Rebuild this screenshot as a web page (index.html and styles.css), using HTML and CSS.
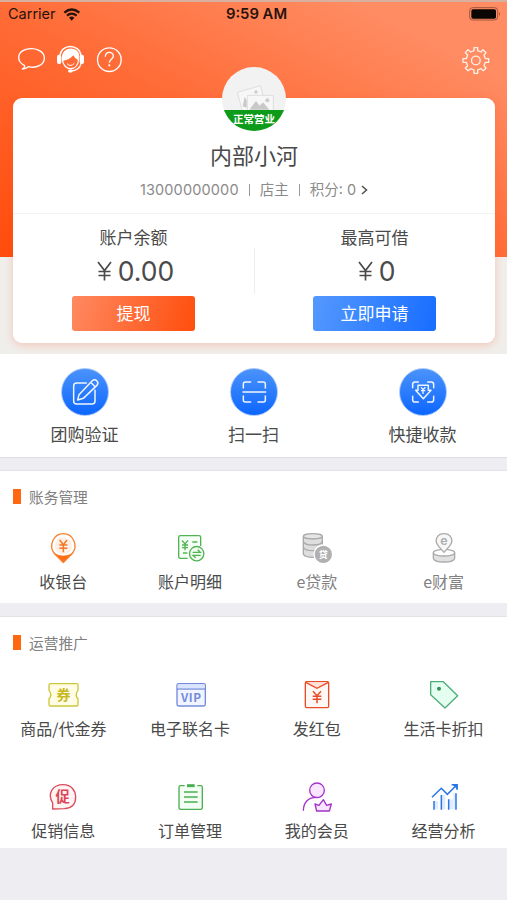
FILE: index.html
```html
<!DOCTYPE html>
<html lang="zh-CN">
<head>
<meta charset="utf-8">
<title>店铺中心</title>
<link rel="stylesheet" href="styles.css">
</head>
<body>
<div class="hero">
  <div class="status">
    <div class="carrier">Carrier
      <svg width="18" height="13" viewBox="186 19 54 39"><g fill="none" stroke="#27130c" stroke-width="7"><path d="M190 33Q212 14 235 33"/><path d="M198 42Q212 30 227 42"/></g><path d="M204 48Q212 41 220 48L212 57Z" fill="#27130c"/></svg>
    </div>
    <div class="time">9:59 AM</div>
    <svg class="battery" width="32" height="14" viewBox="648 19 96 42"><rect x="650" y="21" width="84" height="37" rx="9" fill="none" stroke="#a2563c" stroke-width="3"/><rect x="655" y="26" width="74" height="28" rx="5" fill="#0b0503"/><path d="M738 34Q744 40 738 46Z" fill="#a2563c"/></svg>
  </div>
  <div class="tools">
    <svg width="29" height="29" viewBox="51 135 87 87" fill="none" stroke="#fff" stroke-width="4"><path d="M74 197C49 184 50 156 78 148C105 141 133 153 133 174C133 195 109 206 85 200Q78 206 67 207Q75 203 74 197Z" stroke-linejoin="round"/></svg>
    <svg width="29" height="29" viewBox="168 135 87 87"><path d="M180 168C182 130 240 130 243 168" fill="none" stroke="#fff" stroke-width="4"/><path d="M186 178C180 138 240 134 238 172L234 180Q224 175 220 166Q208 180 190 182Z" fill="#fff"/><rect x="171" y="164" width="13" height="28" rx="6" fill="#fff"/><rect x="239" y="164" width="13" height="28" rx="6" fill="#fff"/><path d="M187 176C188 197 200 206 212 206C226 206 235 194 236 176M244 188C240 205 227 213 213 213" fill="none" stroke="#fff" stroke-width="4"/><path d="M201 191Q212 202 223 190" fill="none" stroke="#fff" stroke-width="3"/><ellipse cx="211" cy="213" rx="7" ry="5" fill="#fff"/></svg>
    <svg width="29" height="29" viewBox="283 135 87 87" fill="none" stroke="#fff" stroke-width="4"><circle cx="326" cy="179" r="35.5"/><path d="M314 170C313 153 338 153 338 168C338 178 326 177 326 188"/><path d="M326 193V199" stroke-width="5"/></svg>
    <svg class="gear" width="31" height="31" viewBox="622 135 93 93" fill="none" stroke="#fff0e9" stroke-width="4" stroke-linejoin="round"><path d="M664 152V143H675V152L685 156L691 149L700 158L694 165L698 176H708V187H698L694 197L700 204L692 212L685 206L675 210V220H664V210L654 206L646 212L638 204L645 197L641 187H631V176H641L645 165L638 158L646 149L654 156Z"/><circle cx="669.500" cy="181.500" r="13"/></svg>
  </div>
  <div class="card">
    <div class="profile">
      <div class="avatar">
        <svg width="64" height="43" viewBox="306 17 192 129" stroke-linejoin="round"><g fill="#f7f7f7" stroke="#dedede" stroke-width="3"><path d="M352 93L421 73L438 133L368 153Z"/><path d="M382 102H460V160H382Z"/></g><circle cx="408" cy="92" r="5" fill="#ccc"/><circle cx="442" cy="117" r="6" fill="#ccc"/><path d="M368 135L374 107L380 117V139ZM388 145L408 119L419 133L429 123L448 145Z" fill="#c9c9c9"/></svg>
        <div class="badge">正常营业</div>
      </div>
      <div class="name">内部小河</div>
      <div class="meta"><span>13000000000</span><span class="bar"></span><span>店主</span><span class="bar"></span><span>积分: 0</span><svg width="7" height="10" viewBox="0 0 7 10"><path d="M1 1L5.500 5L1 9" fill="none" stroke="#555" stroke-width="1.600"/></svg></div>
    </div>
    <div class="funds">
      <div class="fund"><div class="fund-label">账户余额</div><div class="amount"><svg class="yen" width="15" height="20" viewBox="0 0 15 20"><path d="M1 1L7.500 9.500L14 1M7.500 9.500V19.500M1.500 10.500H13.500M1.500 14.500H13.500"/></svg>0.00</div><div class="btn orange">提现</div></div>
      <div class="fund"><div class="fund-label">最高可借</div><div class="amount"><svg class="yen" width="15" height="20" viewBox="0 0 15 20"><path d="M1 1L7.500 9.500L14 1M7.500 9.500V19.500M1.500 10.500H13.500M1.500 14.500H13.500"/></svg>0</div><div class="btn blue">立即申请</div></div>
    </div>
  </div>
</div>

<div class="quick">
  <div class="quick-item"><div class="disc"><svg width="48" height="48" viewBox="183 54 144 144" fill="none" stroke="#eef5ff" stroke-width="4.500" stroke-linejoin="round"><path d="M259 99H230Q221 99 221 108V153Q221 162 230 162H276Q285 162 285 153V121" stroke-linecap="round"/><path d="M233 150L237 134L276 93Q284 86 291 93Q297 100 290 107L250 145ZM272 97L286 111"/></svg></div>团购验证</div>
  <div class="quick-item"><div class="disc"><svg width="48" height="48" viewBox="-73 54 144 144" fill="none" stroke="#eef5ff" stroke-width="4.500" stroke-linecap="round" stroke-linejoin="round"><path d="M-11 96H-27Q-33 96-33 102V114M11 96H27Q33 96 33 102V114M-33 138V150Q-33 156-27 156H-11M33 138V150Q33 156 27 156H11M-34 126H34"/></svg></div>扫一扫</div>
  <div class="quick-item"><div class="disc"><svg width="48" height="48" viewBox="438 54 144 144" fill="none" stroke="#eef5ff" stroke-width="4.500" stroke-linejoin="round"><path d="M496 96H486Q479 96 479 103V113M524 96H535Q542 96 542 103V113M479 139V149Q479 156 486 156H496M524 156H535Q542 156 542 149V139" stroke-linecap="round"/><path d="M495 106H526V121H534L511 146L488 121H495Z"/><path d="M504 112L510 119L517 112M510 119V132M504 122H517" stroke-width="4"/></svg></div>快捷收款</div>
</div>

<div class="section">
  <div class="title">账务管理</div>
  <div class="grid">
    <div class="item"><svg viewBox="144 36 96 96"><path d="M193 130L160 97Q177 107 193 107Q209 107 226 97Z" fill="#ff6c12"/><path d="M193 127L168 102C145 77 165 41 193 41C221 41 241 77 218 102Z" fill="none" stroke="#f58233" stroke-width="4"/><circle cx="193" cy="77" r="26" fill="#fff0e6"/><path d="M182 60L193 74L204 60M193 74V97M181 75H205M181 85H205" fill="none" stroke="#f47726" stroke-width="4.500"/></svg>收银台</div>
    <div class="item"><svg viewBox="522 36 96 96" fill="none" stroke="#51b453" stroke-width="4"><path d="M563 115H541Q536 115 536 109V52Q536 47 541 47H597Q602 47 602 52V78" fill="#f6fff6"/><path d="M546 61L555 72L564 61M555 72V91M546 75H564M546 83H564M577 66H592M549 99H562"/><circle cx="590" cy="101" r="21.500" fill="#f1fbf1"/><path d="M578 97H601L593 89M602 106H579L587 113"/></svg>账户明细</div>
    <div class="item muted"><svg viewBox="144 36 96 96" stroke="#aaa" stroke-width="4"><path d="M151 49V102Q154 112 182 112L208 95V49" fill="#dedede"/><ellipse cx="179.500" cy="49" rx="28.500" ry="8" fill="#e5e5e5"/><path d="M151 64Q153 75 180 75Q207 75 208 64M151 81Q153 92 180 92Q200 92 207 82" fill="none"/><circle cx="211" cy="103" r="28" fill="#b0b0b0" stroke="#fff"/><text x="211" y="113" text-anchor="middle" font-size="27" font-weight="700" fill="#fff" stroke="none">贷</text></svg>e贷款</div>
    <div class="item muted"><svg viewBox="524 36 96 96" stroke="#ababab" stroke-width="4"><path d="M540 98V115Q542 126 572 126Q602 126 604 115V98" fill="#e1e1e1"/><ellipse cx="572" cy="98" rx="32" ry="10" fill="#fff"/><path d="M572 97L556 79C540 61 552 41 572 41C592 41 604 61 588 79Z" fill="#f7f7f7"/><text x="572" y="75" text-anchor="middle" font-size="37" font-weight="600" fill="#ababab" stroke="none" class="latin">e</text></svg>e财富</div>
  </div>
</div>

<div class="section promo">
  <div class="title">运营推广</div>
  <div class="grid">
    <div class="item"><svg viewBox="144 27 96 96"><path d="M150 45Q150 41 154 41H233Q237 41 237 45V61Q226 74 237 87V104Q237 108 233 108H154Q150 108 150 104V87Q161 74 150 61Z" fill="#fffde5" stroke="#cbc83b" stroke-width="4"/><text x="193.500" y="90" text-anchor="middle" font-size="42" font-weight="700" fill="#c9b821">券</text></svg>商品/代金券</div>
    <div class="item"><svg viewBox="522 27 96 96"><rect x="531" y="41" width="85" height="67" rx="5" fill="#f1f5ff" stroke="#738bdb" stroke-width="4"/><path d="M531 57H616" stroke="#738bdb" stroke-width="4"/><path d="M533 49H614" stroke="#dce5ff" stroke-width="11"/><text x="574" y="95" text-anchor="middle" font-size="35" font-weight="700" letter-spacing="2" fill="#738bdb">VIP</text></svg>电子联名卡</div>
    <div class="item"><svg viewBox="144 27 96 96" fill="none" stroke="#e74d28" stroke-width="4"><rect x="157" y="35" width="70" height="78" rx="4" fill="#fff7f3"/><path d="M158 37L192 55L226 37" fill="#ffe1d8"/><path d="M180 64L192 77L204 64M192 77V100M179 79H205M179 88H205" stroke-width="4.500"/></svg>发红包</div>
    <div class="item"><svg viewBox="524 27 96 96"><path d="M532 35H570L613 77L575 114L532 74Z" fill="#e4ffef" stroke="#4fad79" stroke-width="4" stroke-linejoin="round"/><circle cx="557" cy="56" r="6" fill="#36925d"/></svg>生活卡折扣</div>
    <div class="item"><svg viewBox="144 333 96 96"><path d="M161 417V399C143 369 162 344 193 344C217 344 230 362 230 381C230 406 215 415 196 416Z" fill="#fff3f4" stroke="#dc4c5d" stroke-width="4" stroke-linejoin="round"/><text x="191" y="397" text-anchor="middle" font-size="43" font-weight="700" fill="#dc4656">促</text></svg>促销信息</div>
    <div class="item"><svg viewBox="522 333 96 96" fill="none" stroke="#4caf54" stroke-width="4"><path d="M554 347H542Q537 347 537 352V412Q537 418 543 418H602Q607 418 607 412V352Q607 347 602 347H592" fill="#f2fff2"/><path d="M561 347H584" stroke-width="9"/><path d="M552 366H593M552 381H593M552 396H593"/></svg>订单管理</div>
    <div class="item"><svg viewBox="144 333 96 96" fill="none" stroke="#a332c8" stroke-width="4" stroke-linejoin="round"><circle cx="192" cy="361" r="22" fill="#f8e5ff"/><path d="M151 422C152 394 169 382 192 382"/><path d="M186 402L198 406L211 389L221 406L235 402L229 423H191Z" fill="#f8e5ff"/></svg>我的会员</div>
    <div class="item"><svg viewBox="524 333 96 96" fill="none" stroke="#2b76e5" stroke-width="4.500"><path d="M542 393H554V418H542ZM563 375H576V418H563ZM586 388H599V418H586ZM600 370H608V418H600Z" fill="#dfebff" stroke="none"/><path d="M536 382L564 355L582 373L607 348M595 344H611V359"/><path d="M601 344H611V354Z" fill="#2b76e5"/><path d="M542 393V419M564 375V419M586 388V419M608 370V419"/></svg>经营分析</div>
  </div>
</div>
</body>
</html>
```
FILE: styles.css
```css
* { box-sizing: border-box; }
body {
  margin: 0;
  background: #ededf2;
  color: #4a4a4a;
  font-family: "Noto Sans CJK SC", sans-serif;
}
svg { display: block; flex: none; }
.hero {
  height: 354px;
  background: linear-gradient(to top right, #ff4c0c, #ff6b36 48%, #ff8c63 85%) 0 0 / 100% 255px no-repeat #f0eeeb;
  border-top: 2px solid #d9afa0;
}
.status {
  height: 24px;
  padding: 0 6px 0 8px;
  display: grid;
  grid-template-columns: 1fr auto 1fr;
  align-items: center;
  font: 14.500px/24px Inter, sans-serif;
  color: #27130c;
}
.carrier { display: flex; align-items: center; gap: 7px; }
.time { font-weight: 600; font-size: 14.800px; padding-left: 4px; }
.battery { justify-self: end; }
.tools { height: 72px; padding: 19px 16px 0 17px; display: flex; gap: 10px; }
.gear { margin-left: auto; }
.card {
  margin: 0 12px 0 13px;
  height: 245px;
  border-radius: 9px;
  background: #fff;
  box-shadow: 0 2px 8px rgba(255, 80, 30, .25);
}
.profile { height: 116px; display: flex; flex-direction: column; align-items: center; border-bottom: 1px solid #f3f3f3; }
.avatar { width: 64px; height: 64px; margin-top: -31px; border-radius: 50%; overflow: hidden; background: #f2f2f3; flex: none; }
.badge { height: 21px; background: #0e9b19; color: #fff; text-align: center; font: 700 10.500px/17px "Noto Sans CJK SC", sans-serif; }
.name { font-size: 22px; line-height: 32px; margin-top: 7px; }
.meta { display: flex; align-items: center; font: 14.500px/20px Inter, "Noto Sans CJK SC", sans-serif; color: #8a8a8a; margin-top: 10px; }
.meta > :first-child { letter-spacing: .15px; }
.bar { width: 1px; height: 12px; margin: 0 10px; background: #999; }
.meta svg { margin-left: 5px; }
.funds { display: grid; grid-template-columns: 1fr 1fr; position: relative; }
.funds::after { content: ""; position: absolute; left: 50%; top: 34px; width: 1px; height: 46px; background: #eee; }
.fund { display: flex; flex-direction: column; align-items: center; padding-top: 11px; }
.fund-label { font-size: 17px; line-height: 24px; }
.amount { height: 44px; display: flex; align-items: center; padding-left: 4px; font: 26.500px/44px Inter, sans-serif; }
.yen { margin-right: 6px; fill: none; stroke: #4a4a4a; stroke-width: 1.7; }
.btn { width: 123px; height: 35px; border-radius: 3px; margin-top: 3px; color: #fff; font-size: 17px; line-height: 34px; text-align: center; }
.orange { background: linear-gradient(105deg, #ff8961, #ff4e0d); }
.blue { background: linear-gradient(105deg, #5599ff, #176dff); }
.quick {
  height: 103px;
  display: grid;
  grid-template-columns: repeat(3, 1fr);
  background: #fff;
  box-shadow: 0 1px 1px #dedee3;
}
.quick-item { display: flex; flex-direction: column; align-items: center; padding-top: 14px; font-size: 17px; line-height: 24px; gap: 6px; }
.disc { width: 48px; height: 48px; border-radius: 50%; background: linear-gradient(#4b93fb, #0c66ff); border: 1px solid #a9c9fb; }
.disc svg { margin: -1px; }
.section { margin-top: 14px; background: #fff; box-shadow: 0 -1px 0 #e3e3e7; }
.title { height: 50px; padding-left: 13px; display: flex; align-items: center; gap: 8px; font-size: 14.700px; color: #808080; }
.title::before { content: ""; width: 8px; height: 15px; margin-top: 1px; background: #ff6810; }
.grid { display: grid; grid-template-columns: repeat(4, 1fr); row-gap: 40px; padding: 11px 0 9px; }
.promo .grid { padding: 12px 0 5px; }
.item { height: 62px; display: flex; flex-direction: column; align-items: center; gap: 5px; font-size: 16px; line-height: 24px; white-space: nowrap; }
.promo .item { height: 62px; }
.item svg { width: 32px; height: 32px; }
.muted { color: #808080; }
.latin { font-family: Inter, sans-serif; }
```
